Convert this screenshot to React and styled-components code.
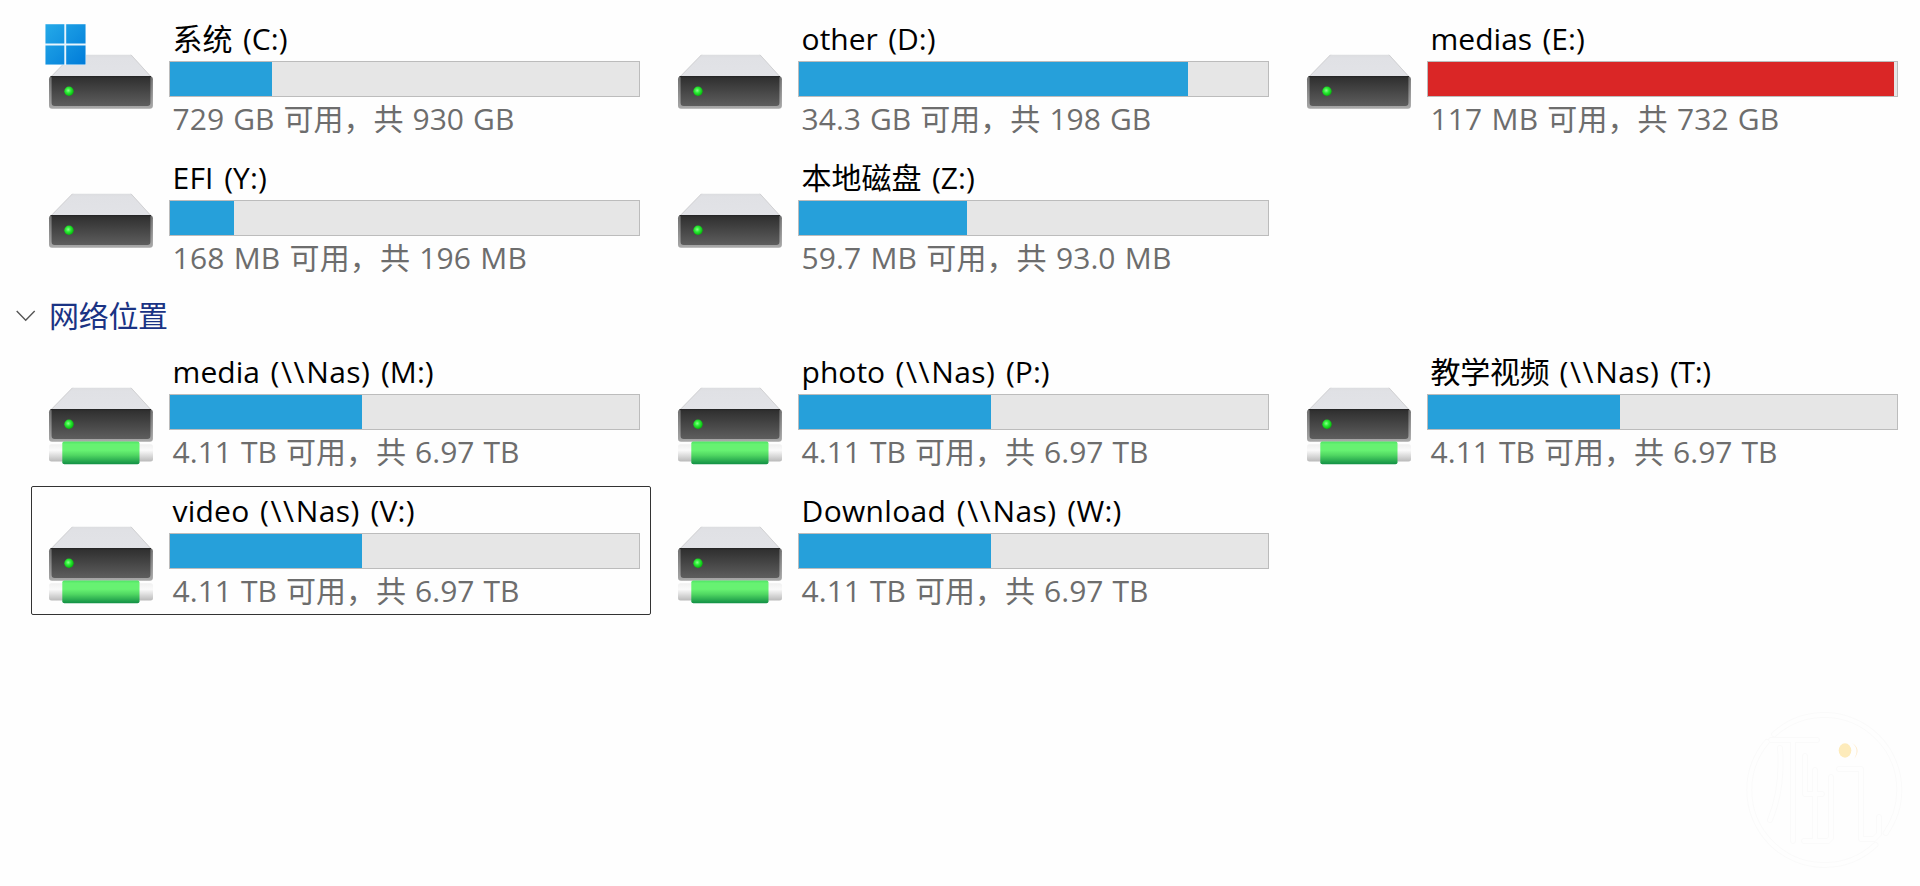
import React from "react";
import styled, { createGlobalStyle } from "styled-components";

const GlobalStyle = createGlobalStyle`
  *, *::before, *::after { box-sizing: border-box; }
  body { margin: 0; background: #fefefe; overflow: hidden; }
`;

const Page = styled.main`
  position: relative;
  width: 1920px;
  height: 886px;
  padding: 14px 0 0 31px;
  overflow: hidden;
  background: #fefefe;
  font-family: "Open Sans", "Noto Sans CJK SC", sans-serif;
  font-size: 30px;
`;

const DriveGrid = styled.section`
  display: grid;
  grid-template-columns: repeat(3, 620px);
  grid-auto-rows: 129px;
  gap: 10px 9px;
`;

const Tile = styled.article`
  display: flex;
  padding: 7px 0 0 12px;
  border: 1px solid ${(p) => (p.$focused ? "#333" : "transparent")};
  border-radius: 2px;
`;

const IconSlot = styled.div`
  flex: 0 0 125px;
  svg { display: block; }
`;

const Details = styled.div`
  display: flex;
  flex-direction: column;
  width: 471px;
`;

const Name = styled.div`
  height: 39px;
  padding-left: 3.6px;
  line-height: 33px;
  letter-spacing: ${(p) => p.$spacing || 0}px;
  word-spacing: 2.6px;
  color: #000;
  white-space: pre;
`;

const HostPrefix = styled.span`
  letter-spacing: 1.6px;
`;

const HostName = styled.span`
  letter-spacing: 0.4px;
`;

const Track = styled.div`
  height: 36px;
  border: 1px solid #bcbcbc;
  background: #e6e6e6;
`;

const Fill = styled.div`
  height: 100%;
  background: ${(p) => (p.$full ? "#da2626" : "#26a0da")};
`;

const Space = styled.div`
  padding-left: 3.6px;
  line-height: 43px;
  letter-spacing: ${(p) => p.$spacing || 0}px;
  word-spacing: 1.3px;
  color: #6d6d6d;
  white-space: pre;
`;

const SectionHeader = styled.header`
  display: flex;
  align-items: center;
  gap: 13px;
  height: 58px;
  margin: 5px 0 2px -15px;
  color: #1a3384;
  line-height: 58px;
  letter-spacing: -0.3px;
  svg { display: block; }
`;

const Watermark = styled.div`
  position: absolute;
  left: 1744px;
  top: 710px;
  svg { display: block; }
`;

function DriveIcon({ id, network, system }) {
  return (
    <svg width="112" height="112" viewBox="0 0 112 112">
      <defs>
        <linearGradient id={`top${id}`} x1="0" y1="0" x2="0" y2="1">
          <stop offset="0" stopColor="#dcdde0" />
          <stop offset=".15" stopColor="#e0e1e5" />
          <stop offset="1" stopColor="#e2e3e7" />
        </linearGradient>
        <linearGradient id={`edge${id}`} x1="0" y1="0" x2="0" y2="1">
          <stop offset="0" stopColor="#6e6e6e" />
          <stop offset="1" stopColor="#a9a9a9" />
        </linearGradient>
        <linearGradient id={`face${id}`} x1="0" y1="0" x2="0" y2="1">
          <stop offset="0" stopColor="#2e2e2e" />
          <stop offset="1" stopColor="#5e5e5e" />
        </linearGradient>
        <radialGradient id={`led${id}`} cx=".42" cy=".42" r=".6">
          <stop offset="0" stopColor="#8dff8d" />
          <stop offset=".45" stopColor="#2bec35" />
          <stop offset="1" stopColor="#05b40b" />
        </radialGradient>
        <linearGradient id={`cable${id}`} x1="0" y1="0" x2="0" y2="1">
          <stop offset="0" stopColor="#4ee565" />
          <stop offset=".12" stopColor="#67f272" />
          <stop offset=".38" stopColor="#67f272" />
          <stop offset=".6" stopColor="#50d762" />
          <stop offset="1" stopColor="#129045" />
        </linearGradient>
        <linearGradient id={`plug${id}`} x1="0" y1="0" x2="0" y2="1">
          <stop offset="0" stopColor="#f0f0f0" />
          <stop offset=".35" stopColor="#fafafa" />
          <stop offset="1" stopColor="#b9b9b9" />
        </linearGradient>
        <linearGradient id={`win${id}`} gradientUnits="userSpaceOnUse" x1="1" y1="2" x2="42" y2="43">
          <stop offset="0" stopColor="#25aae8" />
          <stop offset="1" stopColor="#007bd9" />
        </linearGradient>
      </defs>
      <path d="M28.5 32.8H87L107.5 55H6.5Z" fill={`url(#top${id})`} />
      <path d="M28.5 32.8L6.8 55M87 32.8L107.2 55" stroke="#d0d0d2" strokeWidth="1" />
      <rect x="5" y="54.2" width="103.9" height="32.6" rx="3" fill={`url(#edge${id})`} />
      <path d="M7.6 54.5H106.4V81Q106.4 84 103.4 84H10.6Q7.6 84 7.6 81Z" fill={`url(#face${id})`} />
      <path d="M6.5 54.6H107" stroke="#222" strokeWidth="1" />
      <circle cx="25" cy="69.2" r="4.7" fill={`url(#led${id})`} />
      {network && (
        <g>
          <rect x="5" y="89.2" width="104" height="17.4" rx="2.5" fill={`url(#plug${id})`} />
          <rect x="18.3" y="86.6" width="77.2" height="22.6" rx="2" fill={`url(#cable${id})`} />
        </g>
      )}
      {system && (
        <g>
          <rect x="1" y="2" width="41" height="41" fill="#e8f4fc" />
          <path d="M1.5 2.2H20.3V21.5H1.5ZM22.2 2.2H41.5V21.5H22.2ZM1.5 23.4H20.3V42.5H1.5ZM22.2 23.4H41.5V42.5H22.2Z" fill={`url(#win${id})`} />
        </g>
      )}
    </svg>
  );
}

const localDrives = [
  { name: "系统", letter: "C", space: "729 GB 可用，共 930 GB", used: 102, system: true },
  { name: "other", letter: "D", space: "34.3 GB 可用，共 198 GB", used: 389 },
  { name: "medias", letter: "E", space: "117 MB 可用，共 732 GB", used: 466, full: true, spaceSpacing: 0.1 },
  { name: "EFI", letter: "Y", space: "168 MB 可用，共 196 MB", used: 64, spacing: 0.15, spaceSpacing: 0.13 },
  { name: "本地磁盘", letter: "Z", space: "59.7 MB 可用，共 93.0 MB", used: 168, spaceSpacing: 0.1 },
];

const nasSpace = "4.11 TB 可用，共 6.97 TB";
const networkDrives = [
  { name: "media", letter: "M", spacing: 0.05 },
  { name: "photo", letter: "P", spacing: 0 },
  { name: "教学视频", letter: "T", spacing: -0.3 },
  { name: "video", letter: "V", spacing: 0.2, focused: true },
  { name: "Download", letter: "W", spacing: 0.3 },
].map((d) => ({ ...d, host: "Nas", space: nasSpace, used: 192 }));

function Drives({ items, prefix }) {
  return (
    <DriveGrid>
      {items.map((d, i) => (
        <Tile key={d.letter} $focused={d.focused}>
          <IconSlot>
            <DriveIcon id={prefix + i} network={Boolean(d.host)} system={d.system} />
          </IconSlot>
          <Details>
            <Name $spacing={d.spacing}>
              {d.name}{" "}
              {d.host && (
                <>
                  <HostPrefix>{"(\\\\"}</HostPrefix>
                  <HostName>{`${d.host}) `}</HostName>
                </>
              )}
              {`(${d.letter}:)`}
            </Name>
            <Track>
              <Fill $full={d.full} style={{ width: d.used }} />
            </Track>
            <Space $spacing={d.spaceSpacing}>{d.space}</Space>
          </Details>
        </Tile>
      ))}
    </DriveGrid>
  );
}

function WatermarkStrokes({ color, width }) {
  return (
    <g stroke={color} strokeWidth={width}>
      <circle cx="80.3" cy="80" r="75" pathLength="360" strokeDasharray="35 12 173 8 132 0" />
      <path d="M27 30H73M49 32V131M36 38Q39 79 26 110M61 46V84H78M71 60V130M60 131H84L87 128V67M95 59H117V129H130L135 124V107" />
    </g>
  );
}

export default function App() {
  return (
    <>
      <GlobalStyle />
      <Page>
        <Drives items={localDrives} prefix="l" />
        <SectionHeader>
          <svg width="20" height="12" viewBox="0 0 20 12" fill="none">
            <path d="M.7 1L9.7 10.2L18.7 1" stroke="#555" strokeWidth="1.4" />
          </svg>
          <span>网络位置</span>
        </SectionHeader>
        <Drives items={networkDrives} prefix="n" />
        <Watermark>
          <svg width="162" height="162" viewBox="0 0 162 162" fill="none" strokeLinecap="round" strokeLinejoin="round">
            <WatermarkStrokes color="#fafafa" width="6" />
            <WatermarkStrokes color="#fefefe" width="4" />
            <path d="M108 33Q118 39 110 49Q116 39 108 33Z" fill="#feebcb" />
            <ellipse cx="101" cy="40.5" rx="6.3" ry="7.2" fill="#fdebbb" />
          </svg>
        </Watermark>
      </Page>
    </>
  );
}
